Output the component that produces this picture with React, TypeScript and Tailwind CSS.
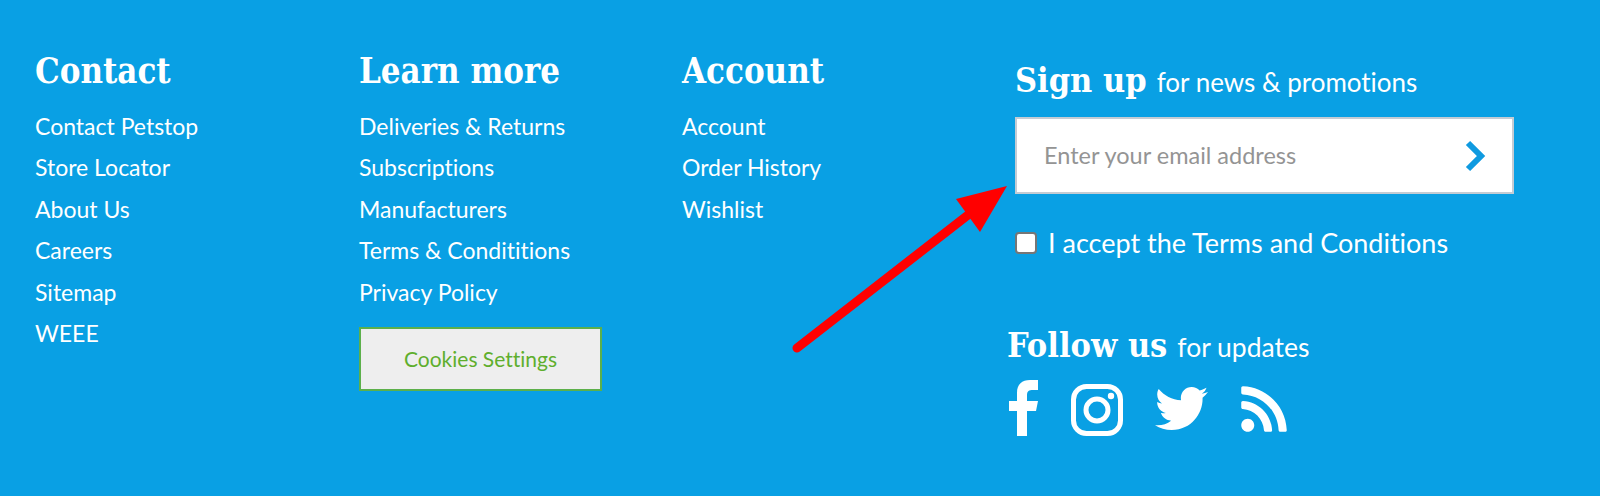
import React from "react";
import { FaTwitter, FaRss } from "react-icons/fa";

const Links = ({ items }: { items: string[] }) => (
  <ul className="mt-[7px] flex flex-col">
    {items.map((t) => (
      <li key={t} className="h-[41.4px] text-[23px] leading-[41.4px] text-white">{t}</li>
    ))}
  </ul>
);

const Heading = ({ children }: { children: React.ReactNode }) => (
  <h2 className="h-[56px] font-['DejaVu_Serif_Condensed','DejaVu_Serif',serif] text-[34.5px] font-bold leading-[56px] text-white">{children}</h2>
);

export default function App() {
  return (
    <div className="relative flex h-[496px] w-[1600px] overflow-hidden bg-[#09a0e4] pl-[35px] pt-[43px] font-['Lato',sans-serif] text-white [font-variant-ligatures:none]">
      <div className="w-[324px]">
        <Heading>Contact</Heading>
        <Links items={["Contact Petstop", "Store Locator", "About Us", "Careers", "Sitemap", "WEEE"]} />
      </div>
      <div className="w-[323px]">
        <Heading>Learn more</Heading>
        <Links items={["Deliveries & Returns", "Subscriptions", "Manufacturers", "Terms & Condititions", "Privacy Policy"]} />
        <button className="mt-[14px] h-[64px] w-[243px] border-2 border-[#5cb04a] bg-[#eeeeee] text-[21px] text-[#5fae2d]">Cookies Settings</button>
      </div>
      <div className="w-[333px]">
        <Heading>Account</Heading>
        <Links items={["Account", "Order History", "Wishlist"]} />
      </div>
      <div className="w-[500px]">
        <div className="flex h-[36px] items-baseline gap-[10px] pt-[7px]">
          <span className="font-['DejaVu_Serif_Condensed','DejaVu_Serif',serif] text-[34px] font-bold leading-[60px]">Sign up</span>
          <span className="text-[26px]">for news &amp; promotions</span>
        </div>
        <div className="mt-[38px] flex h-[77px] w-[499px] items-center justify-between border-2 border-[#c4ccd4] bg-white pl-[27px] pr-[26px]">
          <span className="text-[23.5px] text-[#949494]">Enter your email address</span>
          <svg width="22" height="32" viewBox="0 0 22 32" fill="none"><path d="M4 3 L17 16 L4 29" stroke="#0f9ae0" strokeWidth="6" /></svg>
        </div>
        <div className="mt-[37px] flex h-[24px] items-center gap-[11px]">
          <span className="h-[22px] w-[22px] rounded-[4px] border-2 border-[#767676] bg-white" />
          <span className="text-[27px]">I accept the Terms and Conditions</span>
        </div>
        <div className="-ml-2 mt-[69px] flex items-baseline gap-[10px]">
          <span className="font-['DejaVu_Serif_Condensed','DejaVu_Serif',serif] text-[34px] font-bold leading-[42px]">Follow us</span>
          <span className="text-[26.5px]">for updates</span>
        </div>
        <div className="-ml-2 mt-[12px] flex items-start">
          <svg className="ml-[2px]" width="29" height="56" viewBox="0 0 29 56" fill="white"><path d="M8 56V31H0V21h8v-8C8 4 13 0 21 0h8v10h-5c-4 0-6 1-6 5v6h11l-2 10h-9v25z" /></svg>
          <svg className="ml-[33px] mt-[4px]" width="52" height="52" viewBox="0 0 52 52" fill="none" stroke="white">
            <rect x="2.5" y="2.5" width="47" height="47" rx="13" strokeWidth="5" />
            <circle cx="26" cy="26" r="11" strokeWidth="5" />
            <circle cx="40" cy="12" r="3.2" fill="white" stroke="none" />
          </svg>
          <FaTwitter className="ml-[32px] mt-[2px]" size={53} />
          <FaRss className="ml-[30px] mt-[3px]" size={52} />
        </div>
      </div>
      <svg className="absolute left-[790px] top-[180px]" width="225" height="175" viewBox="790 180 225 175" fill="#ff0000">
        <path d="M797 348 L968 215" stroke="#ff0000" strokeWidth="9" strokeLinecap="round" />
        <path d="M1007 186 L956 199 L980 232 Z" />
      </svg>
    </div>
  );
}
